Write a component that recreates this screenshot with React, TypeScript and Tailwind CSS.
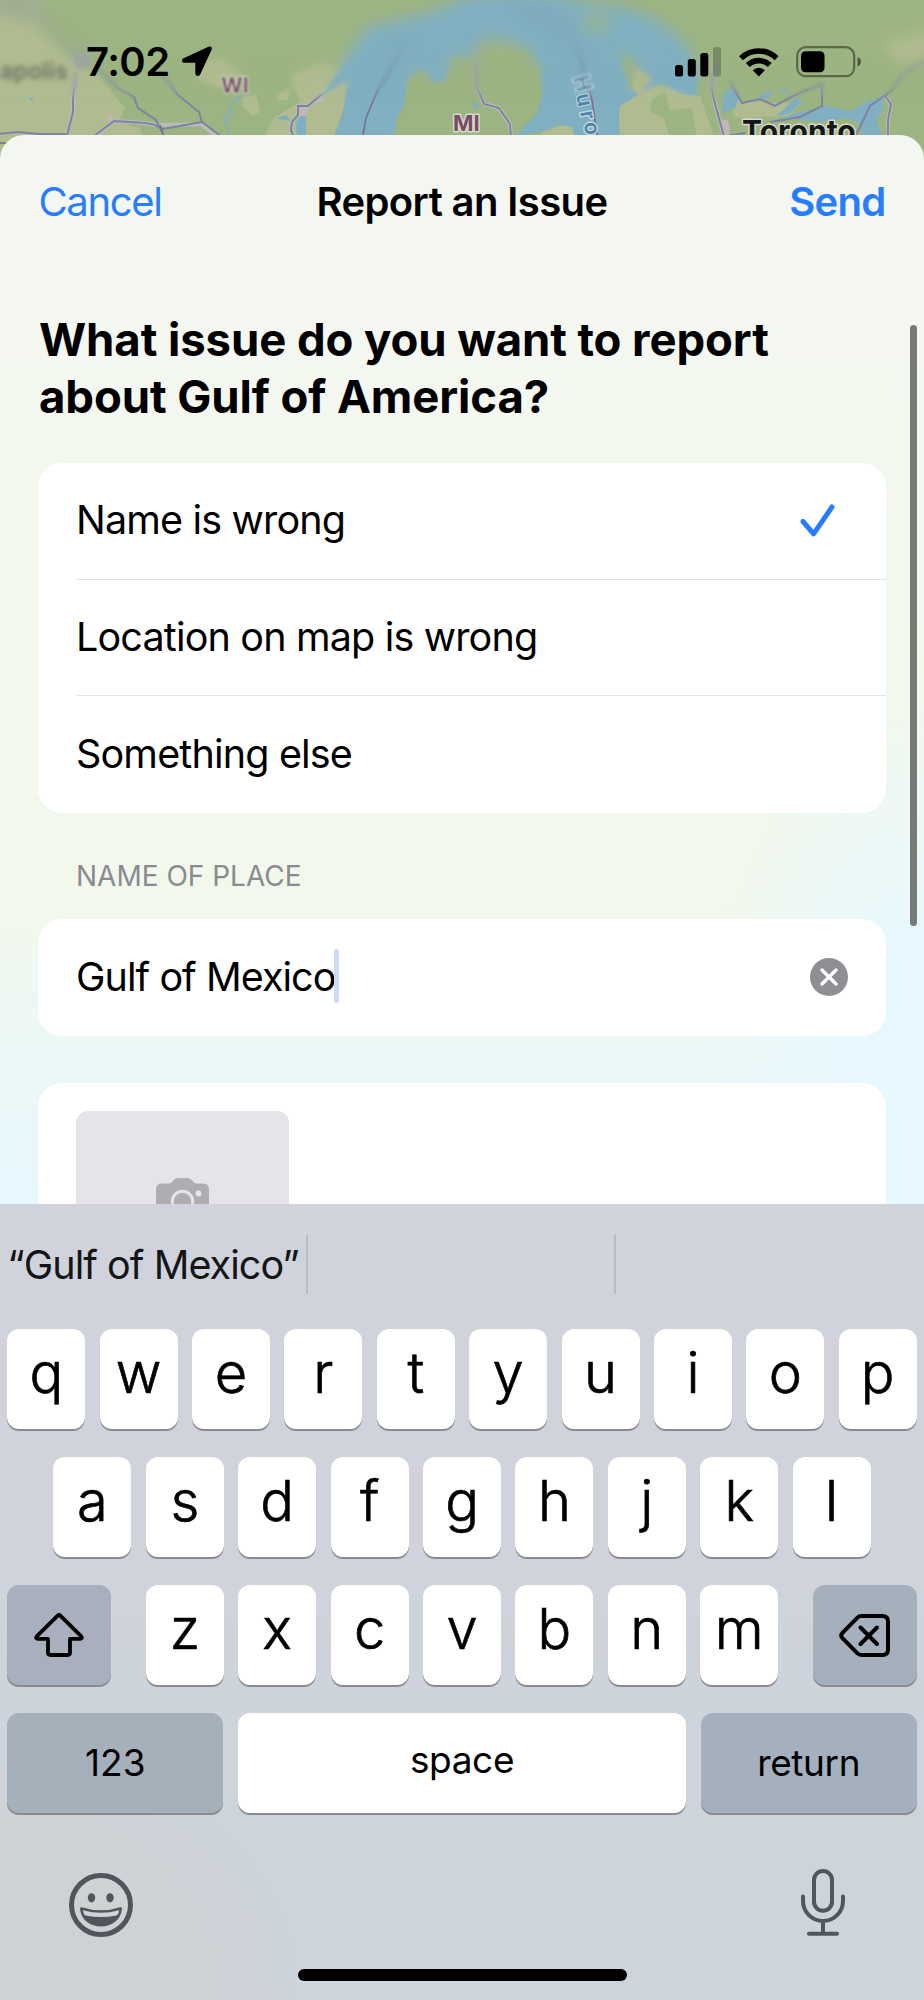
import { useState, type ReactNode } from 'react';

const issues = ['Name is wrong', 'Location on map is wrong', 'Something else'];

const rows = ['qwertyuiop', 'asdfghjkl', 'zxcvbnm'];

function MapShapes() {
  return (
    <>
      <rect x="-20" y="-20" width="964" height="200" fill="#9cb481" />

      {/* farmland */}
      <g fill="#b0bc90">
        <path d="M-20 -20H10L40 25L65 55L100 78L125 108L118 122L140 128L150 180H-20Z" />
        <path d="M205 58L225 60L245 78L232 90L212 86L196 78Z" />
        <path d="M243 98L256 94L260 112L252 116L243 106Z" />
        <path d="M276 95L290 88L288 100L278 101Z" />
        <path d="M290 75L325 62L352 76L343 110L332 140H262L274 118L300 102Z" />
        <path d="M545 130L562 125L573 127L575 140H535Z" />
        <path d="M618 105L640 85L672 88L700 96L715 140H618Z" />
        <path d="M730 100L800 104L790 116L735 118Z" />
        <path d="M575 12L610 15L608 32L580 30Z" />
        <path d="M880 45L910 36L944 30V56L900 64Z" />
      </g>
      <path d="M-20 -20H30L50 8L30 20L-20 12Z" fill="#a2b091" />
      <path d="M652 100L665 92L670 110L692 108L697 140H670L664 118L650 112Z" fill="#9cb481" />

      {/* lakes */}
      <g fill="#7fafc1">
        <path d="M333 140L343 112L347 84L352 78L322 96L345 60L368 28L400 20L440 10L470 -4L520 -10L625 8L655 20L680 38L699 70L697 96L682 94L662 84L654 86L640 94L620 106L619 118L620 140H575L572 127L560 125L545 131L515 136L527 124L538 112L543 90L540 66L528 48L500 38L482 40L468 58L452 54L446 80L434 83L422 68L408 78L404 105L396 120L395 140Z" />
        <path d="M723 94L733 88L739 97L735 108L722 113Z" />
        <path d="M298 116L306 115L306 140H297L296 125Z" />
        <path d="M276 118L286 115L291 121L283 120Z" />
        <path d="M27 97L34 98L32 101Z" />
        <path d="M472 101L480 107L474 109Z" />
        <path d="M782 118L800 112L828 106L850 111L868 101L884 96L882 112L876 120L884 140H862L860 124L846 118L820 122Z" />
        <path d="M776 116L796 98L803 100L790 114Z" />
      </g>
      <path d="M620 50L634 58L642 84L630 92L624 70Z" fill="#9cb481" />
      <path d="M590 10L612 16L606 34L576 28Z" fill="#94b494" />
      <path d="M636 66L652 78L640 96L632 88Z" fill="#adba8e" />
      <path d="M760 95L772 90L770 97L758 100ZM778 91L789 87L785 93Z" fill="#7fafc1" />
      <path d="M243 95L232 102L229 112L224 118L230 134M227 122L232 112" fill="none" stroke="#7fafc1" strokeWidth="1.5" />

      {/* cities */}
      <g fill="#bfb6b9">
        <circle cx="110" cy="118" r="3" />
        <path d="M314 96L324 96L322 102L314 103ZM298 108L310 106L306 116L296 116Z" />
        <path d="M722 120L728 120L730 130L728 140H722Z" />
      </g>
      <circle cx="82" cy="60" r="9" fill="#9a9fa8" />

      {/* roads */}
      <g fill="none" stroke="#b9bdb6" strokeWidth="4">
        <path d="M76 72L73 98L73 112L66 140" />
        <path d="M94 137L114 121L146 123L155 125L200 124L222 140" />
        <path d="M295 140L291 130L292 122L298 115V106H308L322 94" />
        <path d="M476 40L477 88L484 104L499 108L510 124L511 140" />
        <path d="M718 60L711 85L714 100L725 140" />
        <path d="M885 96L891 104L888 120L888 140" />
      </g>
      <g fill="none" stroke="#7c83a3" strokeWidth="2">
        <path d="M-4 134L18 132L40 134H66" />
        <path d="M0 5L40 20L76 56" stroke="#8f9a9a" strokeWidth="4" />
        <path d="M76 72L73 98L73 112L66 140" />
        <path d="M98 68L116 87L134 97L138 108L156 120L163 134" />
        <path d="M160 72L178 95L199 112L202 122L222 137" />
        <path d="M94 136L114 121L146 123L155 125L163 129L202 122" />
        <path d="M295 140L291 130L292 122L298 115V106H308L322 94" />
        <path d="M476 40L477 88L484 104L499 108L510 124L511 140" />
        <path d="M718 60L711 85L714 100L725 140" />
        <path d="M730 82L742 103L760 99L775 106L795 95L822 84L822 106L800 117L770 122" />
        <path d="M885 96L891 104L888 120L888 140" />
        <path d="M944 50L905 72L890 92L870 106L856 135" />
        <path d="M728 136L745 133" />
      </g>
      <g fill="none" stroke="#7a6a92" strokeWidth="1.5">
        <path d="M404 40L396 60L376 94L366 118L362 140" />
        <path d="M520 5L572 35L582 62L592 100L598 140" />
        <path d="M160 125L165 140" />
        <path d="M-4 143H6" />
      </g>
    </>
  );
}

function MapLabels() {
  return (
    <g fontFamily="Inter, sans-serif" stroke="#d6dccb" strokeWidth="3" paintOrder="stroke" strokeLinejoin="round">
      <text x="0" y="79" fontSize="23.5" fontWeight="600" fill="#6b7466" strokeWidth="0" filter="url(#labelFar)">apolis</text>
      <text x="221" y="93" fontSize="21" fontWeight="700" fill="#7a4b66" strokeWidth="2" filter="url(#labelNear)">WI</text>
      <text x="453" y="131" fontSize="22" fontWeight="700" fill="#7a4b66">MI</text>
      <text x="742" y="142" fontSize="30" fontWeight="700" fill="#161818">Toronto</text>
      <g fontSize="21" fontWeight="600" fill="#4d83a8" stroke="#bfd6dc">
        <text transform="translate(573 78) rotate(74)" filter="url(#labelNear)">H</text>
        <text transform="translate(576 95) rotate(78)" strokeWidth="2">u</text>
        <text transform="translate(580 112) rotate(80)">r</text>
        <text transform="translate(584 123) rotate(82)">o</text>
      </g>
    </g>
  );
}

function MapBackdrop() {
  return (
    <svg className="absolute left-0 top-0 h-[170px] w-[924px]" viewBox="0 0 924 170">
      <defs>
        <filter id="soft" x="-5%" y="-20%" width="110%" height="140%">
          <feGaussianBlur stdDeviation="8" />
        </filter>
        <filter id="softer" x="-5%" y="-20%" width="110%" height="140%">
          <feGaussianBlur stdDeviation="2.2" />
        </filter>
        <filter id="labelFar"><feGaussianBlur stdDeviation="2.4" /></filter>
        <filter id="labelNear"><feGaussianBlur stdDeviation="1.2" /></filter>
        <linearGradient id="fadeTop" x1="0" y1="0" x2="0" y2="1">
          <stop offset="0.26" stopColor="#fff" />
          <stop offset="0.5" stopColor="#000" />
        </linearGradient>
        <linearGradient id="fadeMid" x1="0" y1="0" x2="0" y2="1">
          <stop offset="0.5" stopColor="#fff" />
          <stop offset="0.6" stopColor="#000" />
        </linearGradient>
        <mask id="topMask"><rect width="924" height="170" fill="url(#fadeTop)" /></mask>
        <mask id="midMask"><rect width="924" height="170" fill="url(#fadeMid)" /></mask>
      </defs>
      <MapShapes />
      <g mask="url(#midMask)"><g filter="url(#softer)"><MapShapes /></g></g>
      <g mask="url(#topMask)"><g filter="url(#soft)"><MapShapes /></g></g>
      <MapLabels />
    </svg>
  );
}

function StatusBar() {
  return (
    <div className="relative flex h-[123px] items-center justify-between pl-[86px] pr-[62px]">
      <div className="flex items-center gap-[11px]">
        <span className="text-[40px] font-semibold leading-none tracking-[-0.014em]">7:02</span>
        <svg className="h-[31px] w-[32px]" viewBox="0 0 32 31">
          <path d="M28.5 1.5L2.5 13.5Q1 15 3 15.8H14.5Q15.3 15.8 15.3 16.8V27.5Q16 30 18 28.5L29.8 3Q30 1.2 28.5 1.5Z" stroke="#000" strokeWidth="2" strokeLinejoin="round" />
        </svg>
      </div>
      <div className="flex items-center">
        <svg className="h-[30px] w-[46px]" viewBox="0 0 46 30">
          <rect x="0" y="18" width="8" height="11.5" rx="2.5" />
          <rect x="12.8" y="12" width="8" height="17.5" rx="2.5" />
          <rect x="25.3" y="6" width="8" height="23.5" rx="2.5" />
          <rect x="38" y="0" width="8" height="29.5" rx="2.5" opacity="0.22" />
        </svg>
        <svg className="ml-[18px] h-[30px] w-[40px]" viewBox="0 0 40 30">
          <g fill="none" stroke="#000" strokeWidth="5.6">
            <path d="M2 11.2A25.6 25.6 0 0 1 37.6 11.2" />
            <path d="M8.8 18A16 16 0 0 1 30.8 18" />
          </g>
          <path d="M19.8 29.5L13.7 23.3Q19.8 18.2 25.9 23.3Z" />
        </svg>
        <svg className="ml-[17px] h-[32px] w-[66px]" viewBox="0 0 66 32">
          <rect x="1.2" y="1.2" width="57" height="29" rx="8.5" fill="none" stroke="#000" strokeOpacity="0.42" strokeWidth="2.2" />
          <rect x="5" y="5.3" width="23.5" height="21" rx="4.5" />
          <path d="M61.5 11Q65 12.5 65 15.7T61.5 20.5Z" opacity="0.5" />
        </svg>
      </div>
    </div>
  );
}

function Key({ children, className = '' }: { children: ReactNode; className?: string }) {
  return (
    <button className={`flex h-[100px] items-center justify-center rounded-[12px] shadow-[0_2px_0_#898b8f] ${className}`}>
      {children}
    </button>
  );
}

function LetterRow({ letters }: { letters: string }) {
  return (
    <div className="flex justify-center gap-[14.4px]">
      {letters.split('').map((l) => (
        <Key key={l} className="w-[78px] bg-white pb-[12px] text-[56px] font-light leading-none [-webkit-text-stroke:0.7px_#000]">
          {l}
        </Key>
      ))}
    </div>
  );
}

function Keyboard({ suggestion }: { suggestion: string }) {
  return (
    <div className="flex h-[796px] flex-col bg-[radial-gradient(ellipse_300px_260px_at_0%_100%,#cfd2d5_0%,#cfd2d5_50%,transparent_100%),linear-gradient(to_bottom,#d0d3dc_0%,#d0d3db_45%,#cdd4db_65%,#cdd4db_100%)]">
      <div className="grid h-[121px] grid-cols-3 items-center">
        <div className="flex h-[59px] items-center justify-center whitespace-nowrap border-r-2 border-[#b9bbc1] pt-0.5 text-[39.5px] tracking-[-0.024em] text-[#141517]">
          “{suggestion}”
        </div>
        <div className="h-[59px] border-r-2 border-[#b9bbc1]" />
      </div>

      <div className="mt-1 flex flex-col gap-7 px-[7.3px]">
        <LetterRow letters={rows[0]} />
        <LetterRow letters={rows[1]} />
        <div className="flex justify-between">
          <Key className="w-[104px] bg-[#a7b0bc]">
            <svg className="h-[44px] w-[50px]" viewBox="0 0 50 44" fill="none" stroke="#000" strokeWidth="3.8" strokeLinejoin="round">
              <path d="M26.3 2.6L47.3 23.4Q48.8 25.8 46 25.8H36V39.5Q36 42 33.5 42H16.5Q14 42 14 39.5V25.8H4Q1.2 25.8 2.7 23.4L23.7 2.6Q25 1.4 26.3 2.6Z" />
            </svg>
          </Key>
          <LetterRow letters={rows[2]} />
          <Key className="w-[104px] bg-[#a6b0bd]">
            <svg className="h-[43px] w-[51px]" viewBox="0 0 51 43" fill="none" stroke="#000" strokeWidth="4" strokeLinecap="round" strokeLinejoin="round">
              <path d="M22.5 2H43.5Q49 2 49 7.5V35.5Q49 41 43.5 41H22.5Q20 41 18.2 39.2L3.2 23.8Q1.2 21.5 3.2 19.2L18.2 3.8Q20 2 22.5 2Z" />
              <path d="M21.5 13.5L38 30M38 13.5L21.5 30" />
            </svg>
          </Key>
        </div>
        <div className="flex gap-[14.3px] text-[37px]">
          <Key className="w-[216px] bg-[#a6b0bb]">123</Key>
          <Key className="flex-1 bg-white pb-1.5 tracking-[-0.01em]">space</Key>
          <Key className="w-[216px] bg-[#a5b0be] tracking-[-0.01em]">return</Key>
        </div>
      </div>

      <div className="flex items-start justify-between pl-[69px] pr-[79px] pt-14">
        <svg className="mt-1 h-16 w-16" viewBox="0 0 64 64" fill="#51555c">
          <circle cx="32" cy="32" r="29.5" fill="none" stroke="#51555c" strokeWidth="5" />
          <ellipse cx="22.5" cy="24.8" rx="3.7" ry="4.6" />
          <ellipse cx="41" cy="24.8" rx="3.7" ry="4.6" />
          <path d="M13 34.2Q32 40.5 51 34.2Q53.4 33.8 53 36.2C51.5 47.5 42.5 53.4 32 53.4S12.5 47.5 11 36.2Q10.6 33.8 13 34.2Z" />
          <path d="M14 37.2Q32 42.5 50 37.2Q49.8 42.2 46.3 42.8Q32 45.2 17.7 42.8Q14.2 42.2 14 37.2Z" fill="#d0d3d8" />
        </svg>
        <svg className="h-[67px] w-[44px]" viewBox="0 0 44 67" fill="none" stroke="#51555c" strokeWidth="4" strokeLinecap="round">
          <rect x="13" y="2" width="18" height="39.7" rx="9" />
          <path d="M2 27.5V32A20 20 0 0 0 42 32V27.5M22 52V64.5M8 64.8H36" />
        </svg>
      </div>
      <div className="mx-auto mt-auto mb-[19px] h-3 w-[329px] rounded-full bg-black" />
    </div>
  );
}

export default function App() {
  const [selected, setSelected] = useState(0);
  const [name, setName] = useState('Gulf of Mexico');

  return (
    <div className="flex h-[2000px] w-[924px] flex-col overflow-hidden bg-[#9cb481] font-['Inter',sans-serif] text-black">
      <div className="relative h-[135px] shrink-0">
        <MapBackdrop />
        <StatusBar />
      </div>

      <main className="relative flex h-[1069px] shrink-0 flex-col overflow-hidden rounded-t-[24px] bg-[radial-gradient(ellipse_220px_340px_at_100%_84%,#e7f8ff_0%,#e7f8ff_25%,transparent_100%),linear-gradient(to_bottom,#f4f7f1_0%,#f3f8ee_40%,#f2f8ec_72%,#ebf8f8_88%,#e7f8ff_100%)]">
        <header className="grid h-[133px] shrink-0 grid-cols-[1fr_auto_1fr] items-center px-[38.5px] text-[40px]">
          <button className="text-left tracking-[-0.034em] text-[#277dff]">Cancel</button>
          <h1 className="whitespace-nowrap text-center font-semibold tracking-[-0.015em]">Report an Issue</h1>
          <button className="text-right font-semibold tracking-[-0.018em] text-[#277dff]">Send</button>
        </header>

        <div className="flex flex-col px-[38px] pt-[43px]">
          <h2 className="whitespace-nowrap pl-px text-[45.5px] font-bold leading-[57px] tracking-[-0.002em]">
            What issue do you want to report
            <br />
            about Gulf of America?
          </h2>

          <ul className="mt-[38px] rounded-[24px] bg-white pl-[38px] text-[39.5px] tracking-[-0.021em]">
            {issues.map((issue, i) => (
              <li
                key={issue}
                onClick={() => setSelected(i)}
                className="flex h-[116.67px] items-center justify-between border-b border-[#e4e4e6] pr-[51px] last:border-0"
              >
                {issue}
                {selected === i && (
                  <svg className="h-[33px] w-[35px]" viewBox="0 0 35 33" fill="none" stroke="#277dff" strokeWidth="5" strokeLinecap="round" strokeLinejoin="round">
                    <path d="M3 17.5L13.6 29.8L32 3" />
                  </svg>
                )}
              </li>
            ))}
          </ul>

          <p className="mt-[43px] pl-[38px] text-[28px] leading-10 text-[#8a8b8f]">NAME OF PLACE</p>

          <div className="mt-[23px] flex h-[117px] items-center rounded-[24px] bg-white px-[38px] text-[39.5px] tracking-[-0.024em]">
            <span>{name}</span>
            {/* text cursor */}
            <span className="-ml-px -mt-0.5 h-[54px] w-[5px] rounded-sm bg-[#ced9fb]" />
            <button className="ml-auto" onClick={() => setName('')}>
              <svg className="h-[38px] w-[38px]" viewBox="0 0 38 38">
                <circle cx="19" cy="19" r="19" fill="#8e8e93" />
                <path d="M12 12L26 26M26 12L12 26" stroke="#fff" strokeWidth="3.4" strokeLinecap="round" />
              </svg>
            </button>
          </div>

          <div className="mt-[47px] h-[220px] rounded-[24px] bg-white px-[38px] pt-7">
            <div className="flex h-[213px] w-[213px] justify-center rounded-[12px] bg-[#e5e4ea] pt-[67px]">
              <svg className="h-[43px] w-[53px]" viewBox="0 0 53 43">
                <path d="M6 5.5H12.5Q14.5 5.5 16 4L18.5 1.5Q20 0 22 0H31.5Q33.5 0 35 1.5L37.5 4Q39 5.5 41 5.5H47Q53 5.5 53 11.5V37Q53 43 47 43H6Q0 43 0 37V11.5Q0 5.5 6 5.5Z" fill="#aeadb2" />
                <circle cx="26.5" cy="23.5" r="10.2" fill="none" stroke="#e5e4ea" strokeWidth="3" />
                <circle cx="42.5" cy="15.5" r="2.9" fill="#e5e4ea" />
              </svg>
            </div>
          </div>
        </div>

        {/* scroll indicator */}
        <div className="absolute right-[7px] top-[190px] h-[601px] w-[7px] rounded-full bg-[#777a77]" />
      </main>

      <Keyboard suggestion={name} />
    </div>
  );
}
